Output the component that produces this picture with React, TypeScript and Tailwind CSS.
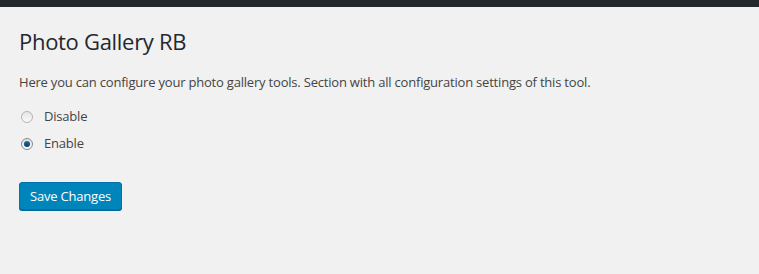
export default function App() {
  return (
    <div className="min-h-[274px] bg-[#f1f1f1] text-[#444] font-['Segoe_UI','Open_Sans',sans-serif] text-[13px] tracking-[-0.2px]">
      <div className="h-[7px] bg-[#23282d]" />
      <div className="px-[19px]">
        <h1 className="pt-[20px] text-[22px] leading-[29px] text-[#23282d] font-normal tracking-[-0.3px]">
          Photo Gallery RB
        </h1>
        <p className="mt-[16px] leading-[20px] text-[#444]">
          Here you can configure your photo gallery tools. Section with all configuration settings of this tool.
        </p>
        <div className="mt-[15px] flex flex-col gap-[7px]">
          <label className="flex items-center gap-[11px] h-[20px]">
            <span className="ml-[2px] w-[12px] h-[12px] rounded-full border border-[#b4b4b4] bg-gradient-to-b from-[#e6e6e6] to-[#fafafa]" />
            <span>Disable</span>
          </label>
          <label className="flex items-center gap-[11px] h-[20px]">
            <span className="ml-[2px] w-[12px] h-[12px] rounded-full border border-[#8a8a8a] bg-gradient-to-b from-[#e0e0e0] to-[#fafafa] flex items-center justify-center">
              <span className="w-[6px] h-[6px] rounded-full bg-gradient-to-b from-[#1c6fa3] to-[#0a3d6b]" />
            </span>
            <span>Enable</span>
          </label>
        </div>
        <button className="mt-[28px] h-[28px] px-[10px] rounded-[3px] bg-[#0085ba] border border-[#0073aa] shadow-[0_1px_0_#006799] text-white leading-[25px]">
          Save Changes
        </button>
      </div>
    </div>
  );
}
